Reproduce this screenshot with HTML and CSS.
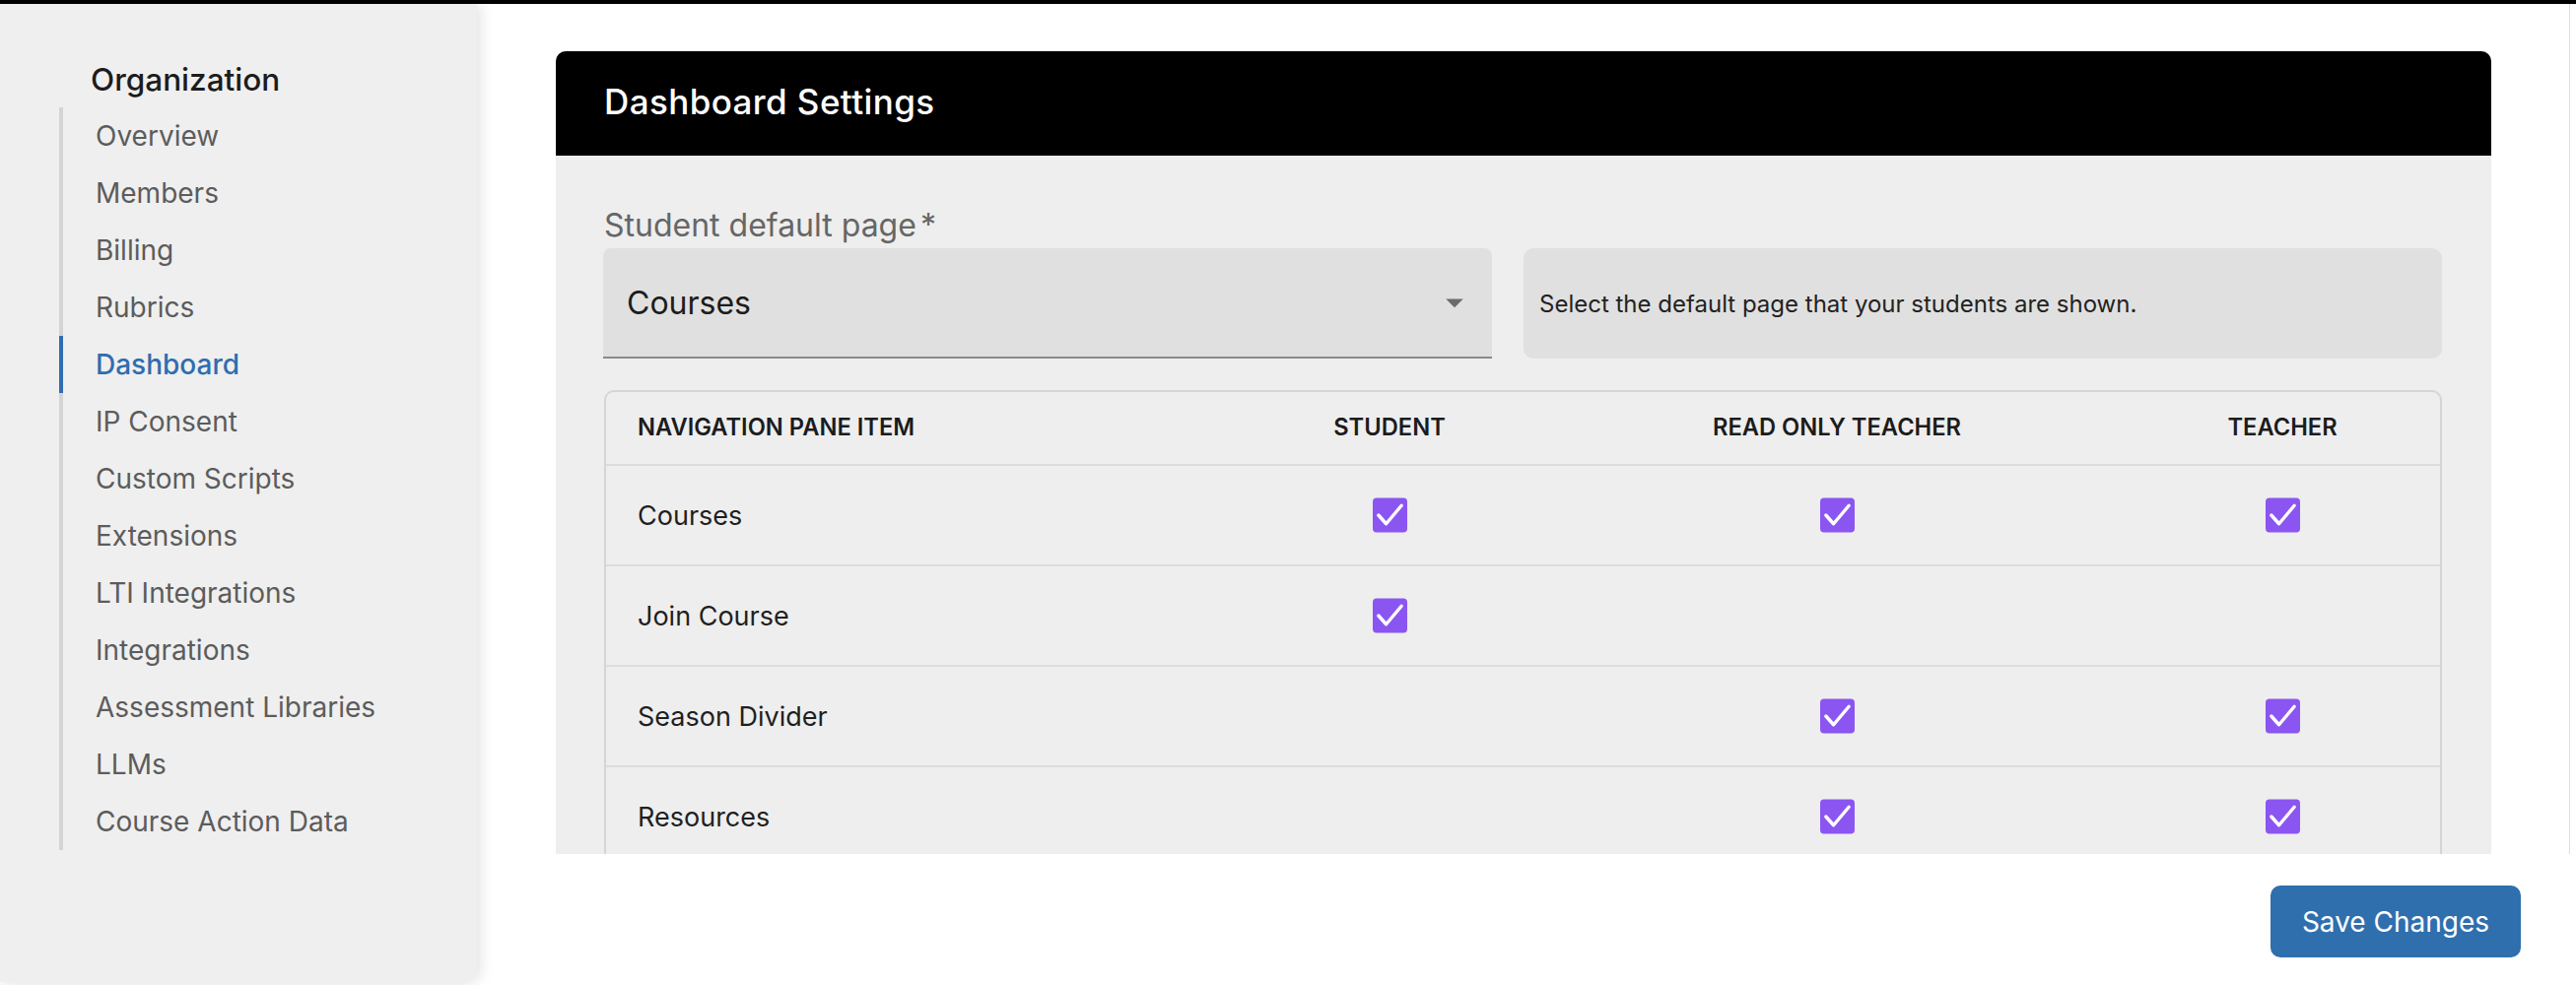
FILE: index.html
```html
<!DOCTYPE html>
<html lang="en">
<head>
<meta charset="utf-8">
<title>Dashboard Settings</title>
<link rel="stylesheet" href="styles.css">
</head>
<body>
<div class="topbar"></div>
<div class="layout">
  <aside class="sidebar">
    <h2 class="side-title">Organization</h2>
    <nav class="side-nav">
      <a class="side-item">Overview</a>
      <a class="side-item">Members</a>
      <a class="side-item">Billing</a>
      <a class="side-item">Rubrics</a>
      <a class="side-item active">Dashboard</a>
      <a class="side-item">IP Consent</a>
      <a class="side-item">Custom Scripts</a>
      <a class="side-item">Extensions</a>
      <a class="side-item">LTI Integrations</a>
      <a class="side-item">Integrations</a>
      <a class="side-item">Assessment Libraries</a>
      <a class="side-item">LLMs</a>
      <a class="side-item">Course Action Data</a>
    </nav>
  </aside>
  <main class="main">
    <div class="scroll">
      <section class="card">
        <header class="card-head">Dashboard Settings</header>
        <div class="card-body">
          <div class="field-label">Student default page<span class="req">*</span></div>
          <div class="field-row">
            <div class="select">
              <span class="select-value">Courses</span>
              <svg class="select-arrow" viewBox="0 0 24 24"><path d="M7 10l5 5 5-5z"/></svg>
            </div>
            <div class="helper">Select the default page that your students are shown.</div>
          </div>
          <div class="table-wrap">
            <table class="perm-table">
              <colgroup>
                <col class="c-item"><col class="c-student"><col class="c-rot"><col class="c-teacher">
              </colgroup>
              <thead>
                <tr><th class="left">NAVIGATION PANE ITEM</th><th>STUDENT</th><th>READ ONLY TEACHER</th><th>TEACHER</th></tr>
              </thead>
              <tbody>
                <tr>
                  <td class="left">Courses</td>
                  <td><svg class="cb" viewBox="0 0 36 36"><rect width="36" height="36" rx="4"/><polyline points="6,18 14,27 30,8"/></svg></td>
                  <td><svg class="cb" viewBox="0 0 36 36"><rect width="36" height="36" rx="4"/><polyline points="6,18 14,27 30,8"/></svg></td>
                  <td><svg class="cb" viewBox="0 0 36 36"><rect width="36" height="36" rx="4"/><polyline points="6,18 14,27 30,8"/></svg></td>
                </tr>
                <tr>
                  <td class="left">Join Course</td>
                  <td><svg class="cb" viewBox="0 0 36 36"><rect width="36" height="36" rx="4"/><polyline points="6,18 14,27 30,8"/></svg></td>
                  <td></td>
                  <td></td>
                </tr>
                <tr>
                  <td class="left">Season Divider</td>
                  <td></td>
                  <td><svg class="cb" viewBox="0 0 36 36"><rect width="36" height="36" rx="4"/><polyline points="6,18 14,27 30,8"/></svg></td>
                  <td><svg class="cb" viewBox="0 0 36 36"><rect width="36" height="36" rx="4"/><polyline points="6,18 14,27 30,8"/></svg></td>
                </tr>
                <tr>
                  <td class="left">Resources</td>
                  <td></td>
                  <td><svg class="cb" viewBox="0 0 36 36"><rect width="36" height="36" rx="4"/><polyline points="6,18 14,27 30,8"/></svg></td>
                  <td><svg class="cb" viewBox="0 0 36 36"><rect width="36" height="36" rx="4"/><polyline points="6,18 14,27 30,8"/></svg></td>
                </tr>
              </tbody>
            </table>
          </div>
        </div>
      </section>
    </div>
    <div class="footer">
      <button class="save-btn">Save Changes</button>
    </div>
  </main>
</div>
</body>
</html>
```

FILE: styles.css
```css
* { box-sizing: border-box; }

html, body {
  margin: 0;
  padding: 0;
  background: #ffffff;
  font-family: Inter, "Noto Sans", "Liberation Sans", sans-serif;
  overflow: hidden;
}

.topbar {
  height: 4px;
  background: #000000;
}

.layout {
  display: flex;
  height: 996px;
}

/* Sidebar */
.sidebar {
  position: relative;
  z-index: 1;
  flex: 0 0 484px;
  height: 993px;
  background: #efefef;
  border-bottom-right-radius: 12px;
  box-shadow: 2px 0 16px rgba(0, 0, 0, 0.14);
  padding: 49px 0 0 60px;
}

.side-title {
  margin: 0 0 0 32px;
  height: 56px;
  line-height: 56px;
  font-size: 31.5px;
  font-weight: 500;
  color: #1c1c1c;
}

.side-nav {
  display: flex;
  flex-direction: column;
  border-left: 4px solid #d4d4d4;
}

.side-item {
  display: block;
  height: 58px;
  line-height: 58px;
  margin-left: -4px;
  border-left: 4px solid transparent;
  padding-left: 33px;
  font-size: 28px;
  color: #5c5c5c;
  text-decoration: none;
}

.side-item.active {
  border-left-color: #2f6db0;
  color: #2f6db0;
  font-weight: 500;
}

/* Main */
.main {
  flex: 1;
  display: flex;
  flex-direction: column;
  min-width: 0;
}

.scroll {
  height: 863px;
  overflow: hidden;
  padding: 48px 79px 0 80px;
  margin-right: 6px;
  border-right: 1px solid #dedede;
}

.card {
  border-radius: 10px 10px 0 0;
  overflow: hidden;
  background: #eeeeee;
}

.card-head {
  height: 106px;
  background: #000000;
  color: #ffffff;
  display: flex;
  align-items: center;
  padding: 0 0 4px 49px;
  font-size: 35px;
  letter-spacing: 0.4px;
  font-weight: 500;
}

.card-body {
  padding: 51px 50px 0 49px;
}

.field-label {
  height: 40px;
  line-height: 40px;
  margin-bottom: 3px;
  font-size: 32px;
  color: #666666;
}

.req {
  margin-left: 4px;
}

.field-row {
  display: grid;
  grid-template-columns: 902px 1fr;
  gap: 32px;
  margin-left: -1px;
}

.select {
  height: 112px;
  background: #e0e0e0;
  border-radius: 8px 8px 0 0;
  border-bottom: 2px solid #8a8a8a;
  display: flex;
  align-items: center;
  justify-content: space-between;
  padding: 0 17px 0 24px;
}

.select-value {
  font-size: 32px;
  color: #1c1c1c;
}

.select-arrow {
  width: 42px;
  height: 42px;
  fill: #6b6b6b;
}

.helper {
  height: 112px;
  background: #e0e0e0;
  border-radius: 10px;
  display: flex;
  align-items: center;
  padding-left: 16px;
  font-size: 24px;
  color: #222222;
}

.table-wrap {
  margin-top: 32px;
  border: 2px solid #d5d5d5;
  border-bottom: none;
  border-radius: 10px 10px 0 0;
  overflow: hidden;
}

.perm-table {
  width: 100%;
  table-layout: fixed;
  border-collapse: collapse;
}

.c-item { width: 633px; }
.c-student { width: 324px; }
.c-rot { width: 584px; }
.c-teacher { width: 320px; }

.perm-table th {
  height: 74px;
  padding: 0 0 2px 0;
  border-bottom: 2px solid #dcdcdc;
  font-size: 23.7px;
  font-weight: 600;
  color: #1c1c1c;
  text-align: center;
  vertical-align: middle;
}

.perm-table td {
  height: 102px;
  padding: 0;
  border-bottom: 2px solid #dcdcdc;
  font-size: 27px;
  color: #1f1f1f;
  text-align: center;
  vertical-align: middle;
}

.perm-table .left {
  text-align: left;
  padding-left: 32px;
}

.cb {
  display: block;
  margin: 0 auto;
  width: 35px;
  height: 36px;
}

.cb rect {
  fill: #8b55f2;
}

.cb polyline {
  fill: none;
  stroke: #ffffff;
  stroke-width: 3.5;
  stroke-linecap: round;
  stroke-linejoin: round;
}

/* Footer */
.footer {
  flex: 1;
  display: flex;
  justify-content: flex-end;
  align-items: flex-start;
  padding: 32px 56px 0 0;
}

.save-btn {
  height: 73px;
  width: 254px;
  border: none;
  border-radius: 10px;
  background: #2f6fae;
  color: #ffffff;
  font-family: Inter, "Noto Sans", "Liberation Sans", sans-serif;
  font-size: 28px;
  font-weight: 400;
  cursor: pointer;
}
```
